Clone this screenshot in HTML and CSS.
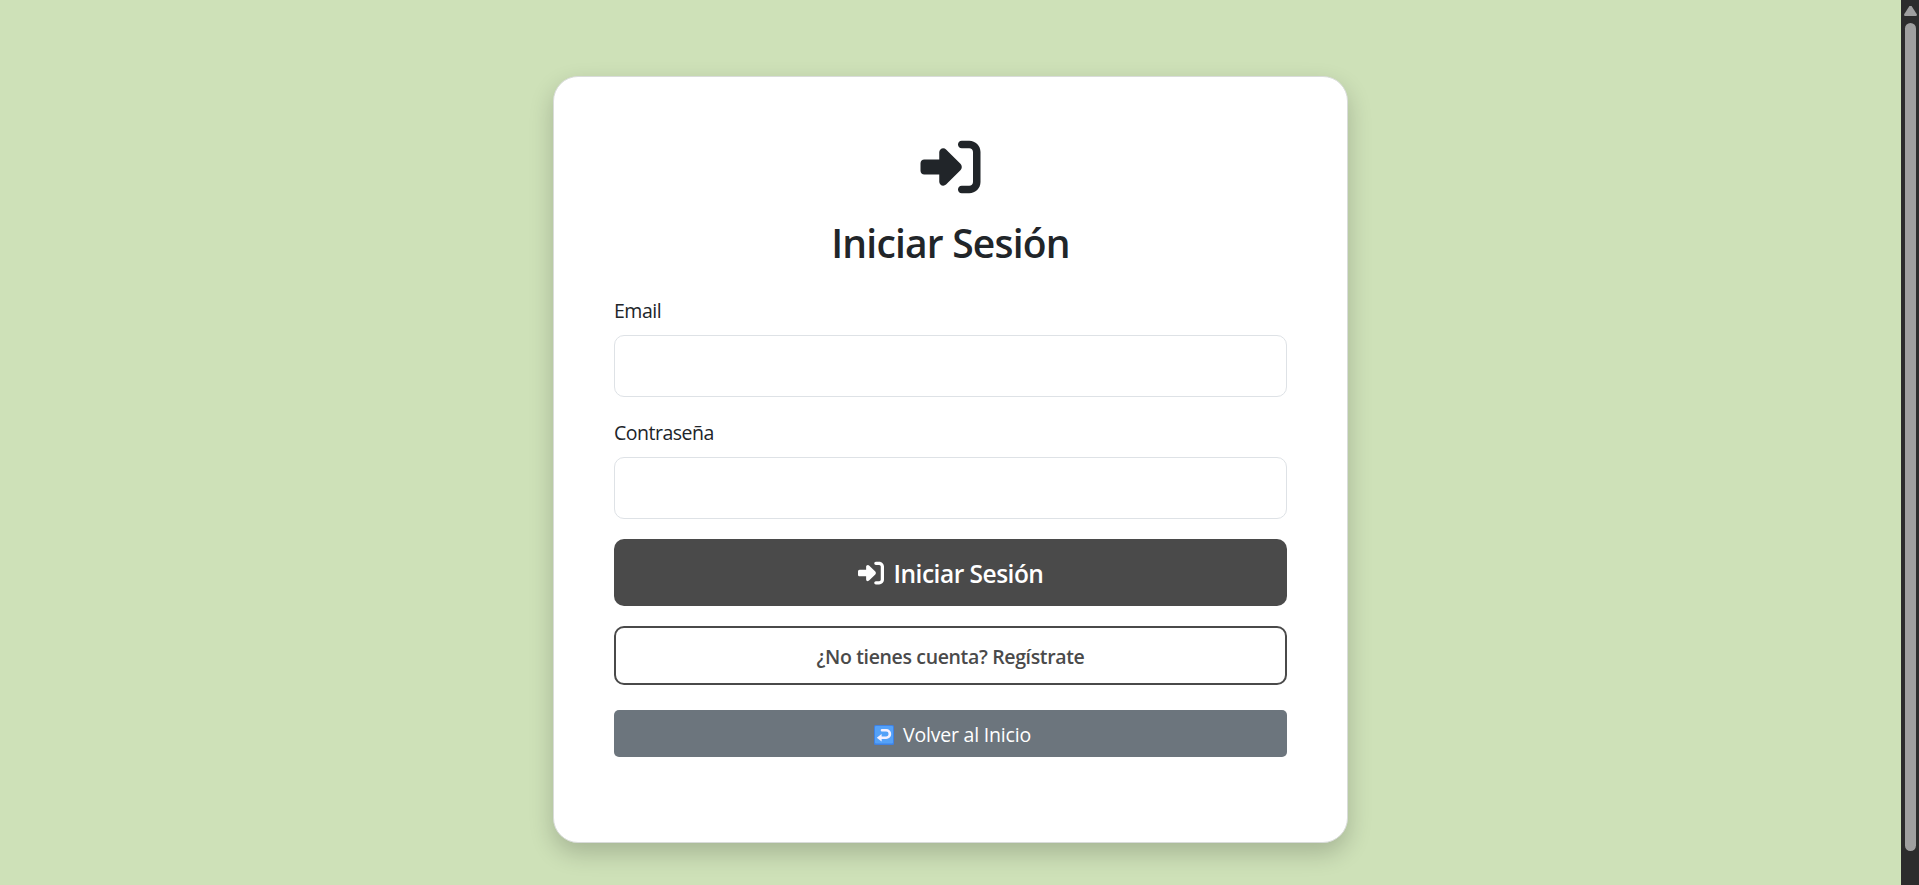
FILE: index.html
```html
<!DOCTYPE html>
<html lang="es">
<head>
<meta charset="utf-8">
<title>Iniciar Sesión</title>
<link rel="stylesheet" href="styles.css">
</head>
<body>
<svg width="0" height="0" class="sprite" aria-hidden="true">
  <symbol id="login" viewBox="0 0 512 512"><path d="M217.9 105.9L340.7 228.7c7.2 7.2 11.3 17.1 11.3 27.3s-4.1 20.1-11.3 27.3L217.9 406.1c-6.4 6.4-15 9.9-24 9.9c-18.7 0-33.9-15.2-33.9-33.9l0-62.1L32 320c-17.7 0-32-14.3-32-32l0-64c0-17.7 14.3-32 32-32l128 0 0-62.1c0-18.7 15.2-33.9 33.9-33.9c9 0 17.6 3.6 24 9.9zM352 416l64 0c17.7 0 32-14.3 32-32l0-256c0-17.7-14.3-32-32-32l-64 0c-17.7 0-32-14.3-32-32s14.3-32 32-32l64 0c53 0 96 43 96 96l0 256c0 53-43 96-96 96l-64 0c-17.7 0-32-14.3-32-32s14.3-32 32-32z"/></symbol>
</svg>
<div class="page">
  <main class="content">
    <form class="card">
      <svg class="card-icon"><use href="#login"/></svg>
      <h1 class="title"><span>Iniciar Sesión</span></h1>
      <label class="label label-email" for="email"><span>Email</span></label>
      <input class="field" id="email" type="email">
      <label class="label label-pass" for="pass"><span>Contraseña</span></label>
      <input class="field" id="pass" type="password">
      <button class="btn btn-primary" type="button"><svg class="btn-icon"><use href="#login"/></svg><span>Iniciar Sesión</span></button>
      <a class="btn btn-outline"><span>¿No tienes cuenta? Regístrate</span></a>
      <a class="btn btn-secondary">
        <svg class="back-icon" viewBox="0 0 20 20">
          <rect width="20" height="20" rx="1.5" fill="#3f82e4"/>
          <rect x="1" y="1" width="18" height="17.5" rx="1" fill="#54a1f8"/>
          <path d="M8 5.300h4.200a3.700 3.700 0 0 1 0 7.400H6.500" fill="none" stroke="#f4f0ff" stroke-width="2.600" stroke-linecap="round"/>
          <path d="M2.800 12.700L7.600 9v7.400z" fill="#f4f0ff"/>
        </svg>
        <span>Volver al Inicio</span>
      </a>
    </form>
  </main>
  <aside class="scrollbar"><span class="arrow"></span><span class="thumb"></span></aside>
</div>
</body>
</html>
```
FILE: styles.css
```css
* { box-sizing: border-box; }
body { margin: 0; overflow: hidden; background: #cee1b8; color: #212529; font-family: "Open Sans", sans-serif; }
.sprite { position: absolute; }
.page { display: flex; height: 885px; }
.content { flex: 1; display: flex; justify-content: center; align-items: flex-start; padding-top: 76px; }
.card { display: flex; flex-direction: column; width: 795px; height: 767px; padding: 60px 60px 0; background: #fff; border: 1px solid #d9dcda; border-radius: 25px; box-shadow: 0 10px 25px rgba(0, 0, 0, .2); }
.card-icon { width: 61px; height: 60px; align-self: center; fill: #212529; }
.title { margin: 16px 0 0; height: 60px; line-height: 60px; font-size: 39px; font-weight: 600; text-align: center; white-space: nowrap; letter-spacing: -.8px; }
.label { height: 30px; line-height: 30px; font-size: 19.5px; letter-spacing: -.5px; }
.label-email { margin-top: 23px; }
.label-pass { margin-top: 21px; }
.field { width: 100%; height: 62px; margin: 9px 0 0; padding: 0 20px; background: #fff; border: 1px solid #dee2e6; border-radius: 10px; font: inherit; font-size: 20px; }
.btn { display: flex; align-items: center; justify-content: center; width: 100%; border: 0; font-family: inherit; white-space: nowrap; }
.btn-primary { height: 67px; margin-top: 20px; padding: 2px 0 0; gap: 10px; background: #4a4a4a; border-radius: 10px; color: #fff; font-size: 24.5px; font-weight: 600; letter-spacing: -.5px; }
.btn-icon { width: 26px; height: 26px; margin-top: -1px; fill: #fff; }
.btn-outline { height: 59px; margin-top: 20px; padding-top: 2px; border: 2px solid #4a4a4a; border-radius: 10px; color: #4a4a4a; font-size: 19.5px; font-weight: 600; letter-spacing: -.35px; }
.btn-secondary { height: 47px; margin-top: 25px; padding: 2px 0 0 4px; gap: 9px; background: #6c757d; border-radius: 5px; color: #fff; font-size: 19.5px; letter-spacing: -.2px; }
.back-icon { width: 20px; height: 20px; }
.scrollbar { display: flex; flex-direction: column; align-items: center; width: 18px; padding: 6px 0 0 1px; background: #2c2c2c; }
.arrow { width: 13px; height: 10px; background: #9f9f9f; clip-path: polygon(42% 0, 58% 0, 100% 85%, 96% 100%, 4% 100%, 0 85%); }
.thumb { width: 11px; height: 828px; margin-top: 7px; border-radius: 6px; background: #9f9f9f; }
```
